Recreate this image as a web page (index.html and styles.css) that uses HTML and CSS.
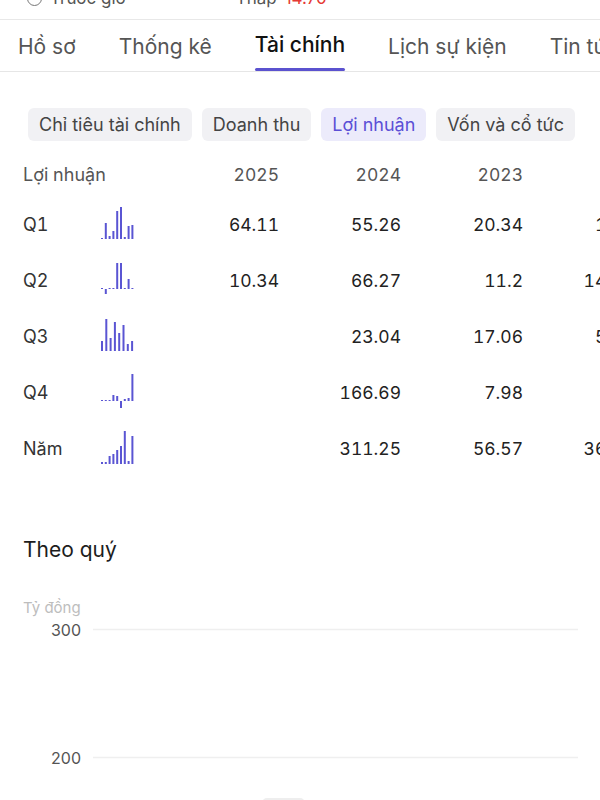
FILE: index.html
```html
<!DOCTYPE html>
<html lang="vi">
<head>
  <meta charset="UTF-8">
  <meta name="viewport" content="width=device-width, initial-scale=1.0">
  <title>Tài chính</title>
  <link rel="stylesheet" href="styles.css">
</head>
<body>

  <div class="status">
    <div class="status-line">
      <span class="status-icon"></span>
      <span class="status-label">Trước giờ</span>
      <span class="status-low">Thấp</span>
      <span class="status-price">14.70</span>
    </div>
  </div>

  <div class="tabs">
    <div class="tab"><span>Hồ sơ</span></div>
    <div class="tab"><span>Thống kê</span></div>
    <div class="tab active"><span>Tài chính</span><i class="tab-bar"></i></div>
    <div class="tab"><span>Lịch sự kiện</span></div>
    <div class="tab"><span>Tin tức</span></div>
  </div>

  <div class="chips">
    <div class="chip">Chỉ tiêu tài chính</div>
    <div class="chip">Doanh thu</div>
    <div class="chip selected">Lợi nhuận</div>
    <div class="chip">Vốn và cổ tức</div>
  </div>

  <div class="table">
    <div class="row head">
      <div class="label">Lợi nhuận</div>
      <div class="spark"></div>
      <div class="num">2025</div>
      <div class="num">2024</div>
      <div class="num">2023</div>
      <div class="num">2022</div>
    </div>
    <div class="row">
      <div class="label">Q1</div>
      <div class="spark"><svg class="spark-svg" data-base="35" data-vals="1,16,3,8,28,32,2,13,14"></svg></div>
      <div class="num">64.11</div>
      <div class="num">55.26</div>
      <div class="num">20.34</div>
      <div class="num">17.89</div>
    </div>
    <div class="row">
      <div class="label">Q2</div>
      <div class="spark"><svg class="spark-svg" data-base="29" data-vals="1,-5,1,1,26,26,1,10,1"></svg></div>
      <div class="num">10.34</div>
      <div class="num">66.27</div>
      <div class="num">11.2</div>
      <div class="num">145.33</div>
    </div>
    <div class="row">
      <div class="label">Q3</div>
      <div class="spark"><svg class="spark-svg" data-base="35" data-vals="10,32,13,29,18,26,7,10"></svg></div>
      <div class="num"></div>
      <div class="num">23.04</div>
      <div class="num">17.06</div>
      <div class="num">52.71</div>
    </div>
    <div class="row">
      <div class="label">Q4</div>
      <div class="spark"><svg class="spark-svg" data-base="29" data-vals="1,1,1,6,5,-7,2,3,27"></svg></div>
      <div class="num"></div>
      <div class="num">166.69</div>
      <div class="num">7.98</div>
      <div class="num"></div>
    </div>
    <div class="row">
      <div class="label">Năm</div>
      <div class="spark"><svg class="spark-svg" data-base="36" data-vals="2,2,8,10,14,18,33,3,28"></svg></div>
      <div class="num"></div>
      <div class="num">311.25</div>
      <div class="num">56.57</div>
      <div class="num">362.05</div>
    </div>
  </div>

  <h3 class="section-title">Theo quý</h3>

  <svg class="chart" width="600" height="215" viewBox="0 0 600 215">
    <text class="unit" x="23" y="20">Tỷ đồng</text>
    <line class="grid" x1="93" y1="36.5" x2="578" y2="36.5"></line>
    <text class="tick" x="81" y="43" text-anchor="end">300</text>
    <line class="grid" x1="93" y1="164.5" x2="578" y2="164.5"></line>
    <text class="tick" x="81" y="171" text-anchor="end">200</text>
    <rect class="peek" x="262" y="205" width="43" height="14" rx="5"></rect>
  </svg>

  <script>
    // draw the little bar sparklines from their data attributes
    document.querySelectorAll('.spark-svg').forEach(svg => {
      const vals = svg.dataset.vals.split(',').map(Number);
      const base = Number(svg.dataset.base);
      const step = vals.length > 8 ? 3.8 : 4.3;
      svg.setAttribute('width', 36);
      svg.setAttribute('height', 40);
      let out = '';
      vals.forEach((v, i) => {
        const x = 1 + i * step;
        const h = Math.abs(v);
        const y = v >= 0 ? base - h : base;
        out += `<rect x="${x.toFixed(1)}" y="${y}" width="2" height="${h}"></rect>`;
      });
      svg.innerHTML = out;
    });
  </script>

</body>
</html>
```

FILE: styles.css
```css
body {
  margin: 0;
  width: 600px;
  height: 800px;
  overflow: hidden;
  background: #fff;
  font-family: 'Inter', 'Roboto', sans-serif;
  color: #222;
}

/* cut-off strip from the card above */
.status {
  height: 19px;
  overflow: hidden;
  border-bottom: 1px solid #e8e8e8;
}

.status-line {
  display: flex;
  align-items: center;
  margin-top: -12px;
  height: 20px;
  font-size: 17px;
  color: #555;
}

.status-icon {
  width: 13px;
  height: 13px;
  border: 1.5px solid #777;
  border-radius: 50%;
  margin-left: 27px;
}

.status-label {
  margin-left: 8px;
}

.status-low {
  margin-left: 110px;
}

.status-price {
  margin-left: 8px;
  color: #e53935;
}

/* tabs */
.tabs {
  display: flex;
  gap: 43px;
  height: 51px;
  padding-left: 18px;
  border-bottom: 1px solid #e6e6e6;
  white-space: nowrap;
}

.tab {
  display: flex;
  flex-direction: column;
  align-items: center;
  font-size: 21px;
  color: #555;
}

.tab span {
  flex: 1;
  display: flex;
  align-items: center;
  padding-top: 1px;
}

.tab.active {
  color: #111;
  font-weight: 500;
}

.tab-bar {
  display: block;
  width: 100%;
  height: 3px;
  border-radius: 2px;
  background: #5b52cf;
}

/* filter chips */
.chips {
  display: flex;
  gap: 10px;
  margin-top: 36px;
  padding-left: 28px;
  white-space: nowrap;
}

.chip {
  height: 33px;
  line-height: 33px;
  padding: 0 11px;
  border-radius: 6px;
  background: #f1f1f4;
  font-size: 18px;
  color: #444;
}

.chip.selected {
  background: #ecebfb;
  color: #5b4fd6;
}

/* profit table */
.table {
  margin-top: 11px;
  padding-left: 23px;
  width: 645px;
}

.row {
  display: grid;
  grid-template-columns: 77px 40px 139px 122px 122px 122px;
  align-items: center;
  height: 56px;
  font-size: 17.5px;
  color: #222;
  font-variant-numeric: tabular-nums;
}

.row.head {
  height: 44px;
  color: #555;
}

.label {
  font-size: 18px;
  color: #333;
  white-space: nowrap;
}

.head .label {
  color: #555;
}

.num {
  text-align: right;
  white-space: nowrap;
}

.spark {
  height: 40px;
}

.spark-svg {
  display: block;
  fill: #5a55d3;
}

/* quarterly chart */
.section-title {
  margin: 59px 0 0 23px;
  height: 30px;
  line-height: 30px;
  font-size: 21px;
  font-weight: 400;
  color: #1d1d1d;
}

.chart {
  display: block;
  margin-top: 28px;
}

.chart .unit {
  font-size: 15px;
  fill: #bdbdbd;
}

.chart .tick {
  font-size: 16px;
  fill: #555;
}

.chart .grid {
  stroke: #efefef;
  stroke-width: 1.5;
}

.chart .peek {
  fill: #eeeeee;
}
```
